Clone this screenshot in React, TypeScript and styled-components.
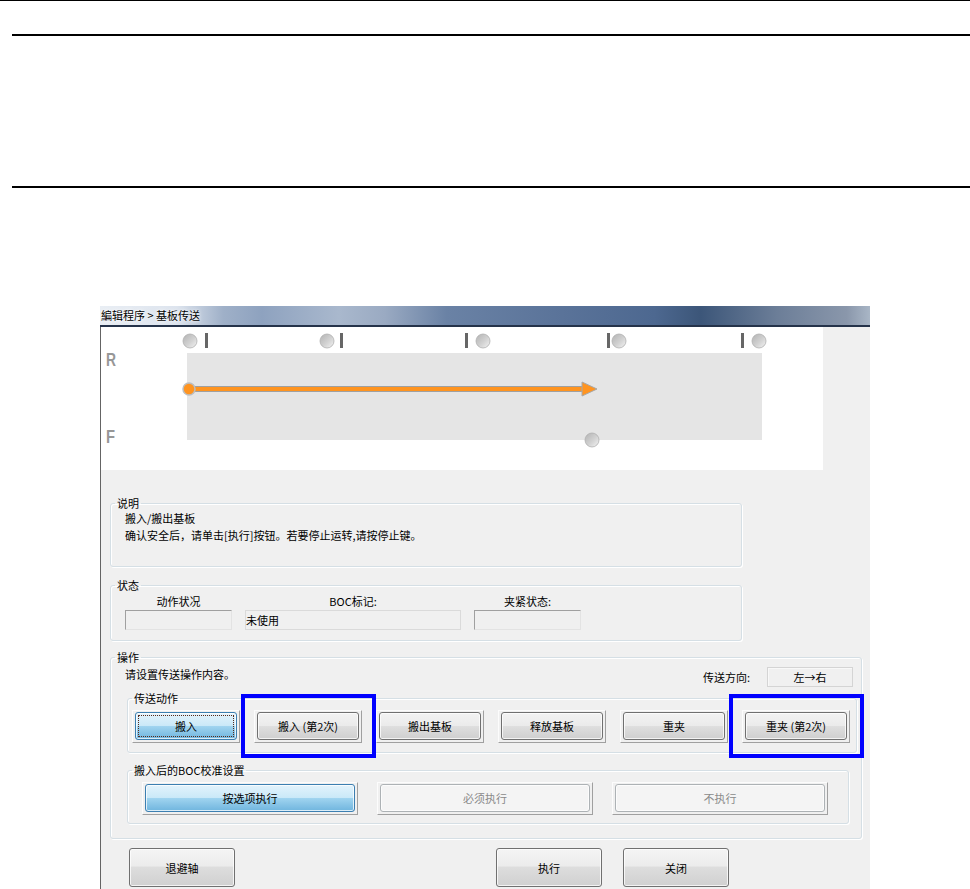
import React from 'react';
import styled, { createGlobalStyle } from 'styled-components';

const GlobalStyle = createGlobalStyle`
  html, body { margin: 0; padding: 0; background: #fff; }
  body {
    font-family: "Noto Sans CJK SC", "Liberation Sans", sans-serif;
    font-size: 11px;
    color: #000;
  }
  * { box-sizing: border-box; }
`;

const Page = styled.div`
  width: 970px;
  height: 889px;
  overflow: hidden;
  display: flex;
  flex-direction: column;
`;

const HairRule = styled.div`
  height: 1px;
  background: #000;
  flex: none;
`;

const Rule = styled.div<{ $top: number }>`
  height: 2px;
  background: #000;
  margin-left: 12px;
  margin-top: ${(p) => p.$top}px;
  flex: none;
`;

const Window = styled.div`
  margin: 118px 0 0 100px;
  width: 770px;
  flex: 1;
  display: flex;
  flex-direction: column;
  min-height: 0;
`;

const TitleBar = styled.div`
  height: 21px;
  flex: none;
  display: flex;
  align-items: center;
  padding: 0 0 2px 1px;
  border-bottom: 2px solid #25334a;
  background: linear-gradient(
    90deg,
    #e9eef4 0%,
    #dde4ee 10%,
    #9fb0c8 16%,
    #8ea2bf 21%,
    #a9b8cd 31%,
    #9aaac2 37%,
    #6a82a5 45%,
    #5a7399 60%,
    #4d6890 72%,
    #3c5679 78%,
    #6c7e98 88%,
    #8a97ab 97%,
    #a9b6c6 100%
  );
  font-size: 11px;
  line-height: 14px;
  text-shadow: 0 0 4px #fff, 0 0 2px #fff;
`;

const Body = styled.div`
  flex: 1;
  display: flex;
  flex-direction: column;
  border-left: 1px solid #646464;
  background: #f0f0f0;
  min-height: 0;
`;

const Canvas = styled.div`
  width: 722px;
  height: 143px;
  background: #fff;
  flex: none;
`;

const Panel = styled.div`
  display: flex;
  flex-direction: column;
  padding: 0 8px 0 9px;
`;

const GroupBox = styled.fieldset<{ $w: number; $mt: number; $ml?: number }>`
  margin: ${(p) => p.$mt}px 0 0 ${(p) => p.$ml ?? 0}px;
  padding: 0;
  min-width: 0;
  width: ${(p) => p.$w}px;
  border: 1px solid #d5dfe5;
  border-radius: 3px;
  box-shadow: inset 1px 1px 0 #fff, 1px 1px 0 #fff;
`;

const Legend = styled.legend`
  margin-left: 4px;
  padding: 0 2px;
  font-size: 11px;
  line-height: 14px;
`;

const DescBody = styled.div`
  height: 56px;
  padding-left: 14px;
  line-height: 17px;
`;

const StatusBody = styled.div`
  height: 48px;
  padding: 2px 0 0 14px;
  display: grid;
  grid-template-columns: 107px 216px 107px;
  grid-template-rows: 14px 20px;
  column-gap: 13px;
  row-gap: 2px;
`;

const FieldLabel = styled.div`
  text-align: center;
  line-height: 14px;
`;

const Field = styled.div<{ $flat?: boolean }>`
  height: 20px;
  border: 1px solid;
  border-color: ${(p) => (p.$flat ? '#dadada' : '#a0a0a0 #e3e3e3 #e3e3e3 #a0a0a0')};
  background: #f0f0f0;
  line-height: 18px;
  padding-left: 0;
`;

const OpBody = styled.div`
  padding: 3px 0 14px 0;
  display: flex;
  flex-direction: column;
`;

const OpHeader = styled.div`
  display: flex;
  justify-content: space-between;
  align-items: flex-start;
  height: 20px;
  padding: 0 8px 0 14px;
  line-height: 14px;
`;

const DirGroup = styled.div`
  display: flex;
  align-items: center;
  gap: 17px;
  height: 20px;
`;

const DirBox = styled.div`
  width: 86px;
  height: 20px;
  border: 1px solid #d4d4d4;
  box-shadow: inset 1px 1px 0 #f8f8f8;
  text-align: center;
  line-height: 18px;
`;

const ButtonRow = styled.div<{ $gap: number; $pad: string }>`
  display: flex;
  gap: ${(p) => p.$gap}px;
  padding: ${(p) => p.$pad};
`;

const Cell = styled.div`
  position: relative;
`;

const Frame = styled.div<{ $w: number; $h: number }>`
  width: ${(p) => p.$w}px;
  height: ${(p) => p.$h}px;
  padding: 1px 2px 2px 2px;
  border: 1px solid;
  border-color: #fcfcfc #a0a0a0 #a0a0a0 #fcfcfc;
`;

type Variant = 'normal' | 'blue' | 'disabled';

const Btn = styled.button<{ $variant?: Variant }>`
  width: 100%;
  height: 100%;
  padding: 0;
  border-radius: 3px;
  font-family: inherit;
  font-size: 11px;
  cursor: default;
  border: 1px solid
    ${(p) => (p.$variant === 'blue' ? '#3c7fb1' : p.$variant === 'disabled' ? '#adb2b5' : '#707070')};
  color: ${(p) => (p.$variant === 'disabled' ? '#8a8a8a' : '#000')};
  background: ${(p) =>
    p.$variant === 'blue'
      ? 'linear-gradient(#e3f3fc 0%, #cbe9f8 48%, #9fd3ef 52%, #6fb5de 100%)'
      : p.$variant === 'disabled'
      ? '#f4f4f4'
      : 'linear-gradient(#f3f3f3 0%, #ebebeb 48%, #dedede 52%, #cfcfcf 100%)'};
  box-shadow: inset 0 0 0 1px rgba(255, 255, 255, 0.75);
`;

const FocusBtn = styled(Btn)`
  outline: 1px dotted #5a2a1a;
  outline-offset: -4px;
`;

const Mark = styled.span`
  position: absolute;
  top: -16px;
  bottom: -15px;
  left: -13px;
  right: -14px;
  border: 4px solid #0000ff;
  pointer-events: none;
`;

const BottomRow = styled.div`
  display: flex;
  margin: 9px 0 0 19px;
`;

const BigButton = styled(Btn)`
  width: 106px;
  height: 39px;
  flex: none;
  font-size: 11px;
  background: linear-gradient(#f4f4f4 0%, #ececec 45%, #dddddd 50%, #d0d0d0 100%);
`;

const Spacer = styled.div<{ $w: number }>`
  width: ${(p) => p.$w}px;
  flex: none;
`;

function Diagram() {
  const tops = [
    { c: 89, b: 104 },
    { c: 226, b: 239 },
    { c: 382, b: 364 },
    { c: 518, b: 506 },
    { c: 658, b: 640 },
  ];
  const axisFont = "'Liberation Sans', Arial, sans-serif";
  return (
    <svg width="722" height="143" viewBox="0 0 722 143">
      <defs>
        <linearGradient id="ball" x1="0" y1="0" x2="1" y2="1">
          <stop offset="0" stopColor="#b2b2b2" />
          <stop offset="0.55" stopColor="#d2d2d2" />
          <stop offset="1" stopColor="#f4f4f4" />
        </linearGradient>
      </defs>
      <rect x="86" y="26" width="575" height="87" fill="#e5e5e5" />
      <text
        x="5"
        y="39"
        fontFamily={axisFont}
        fontWeight="bold"
        fontSize="19"
        fill="#979797"
        textLength="10"
        lengthAdjust="spacingAndGlyphs"
      >
        R
      </text>
      <text
        x="5"
        y="116"
        fontFamily={axisFont}
        fontWeight="bold"
        fontSize="19"
        fill="#979797"
        textLength="9"
        lengthAdjust="spacingAndGlyphs"
      >
        F
      </text>
      {tops.map((t, i) => (
        <g key={i}>
          <circle cx={t.c} cy={14} r={7} fill="url(#ball)" stroke="#b0b0b0" strokeWidth="0.8" />
          <rect x={t.b} y={6} width={3} height={15} fill="#666" />
        </g>
      ))}
      <line x1="88" y1="62" x2="484" y2="62" stroke="#a0a0a0" strokeWidth="6" />
      <line x1="88" y1="62" x2="484" y2="62" stroke="#ff9420" strokeWidth="4" />
      <polygon points="481,55 496,62 481,69" fill="#ff9420" stroke="#a8a8a8" strokeWidth="1" />
      <circle cx="88" cy="62" r="6" fill="#ff9420" stroke="#bdbdbd" strokeWidth="1.5" />
      <circle cx="491" cy="113" r="7" fill="url(#ball)" stroke="#b0b0b0" strokeWidth="0.8" />
    </svg>
  );
}

const transferButtons: { label: string; variant?: Variant; focus?: boolean; mark?: boolean }[] = [
  { label: '搬入', variant: 'blue', focus: true },
  { label: '搬入 (第2次)', mark: true },
  { label: '搬出基板' },
  { label: '释放基板' },
  { label: '重夹' },
  { label: '重夹 (第2次)', mark: true },
];

const bocButtons: { label: string; variant: Variant }[] = [
  { label: '按选项执行', variant: 'blue' },
  { label: '必须执行', variant: 'disabled' },
  { label: '不执行', variant: 'disabled' },
];

export default function App() {
  return (
    <Page>
      <GlobalStyle />
      <HairRule />
      <Rule $top={33} />
      <Rule $top={150} />
      <Window>
        <TitleBar>編辑程序 &gt; 基板传送</TitleBar>
        <Body>
          <Canvas>
            <Diagram />
          </Canvas>
          <Panel>
            <GroupBox $w={632} $mt={26}>
              <Legend>说明</Legend>
              <DescBody>
                <div>搬入/搬出基板</div>
                <div>确认安全后，请单击[执行]按钮。若要停止运转,请按停止键。</div>
              </DescBody>
            </GroupBox>

            <GroupBox $w={632} $mt={11}>
              <Legend>状态</Legend>
              <StatusBody>
                <FieldLabel>动作状况</FieldLabel>
                <FieldLabel>BOC标记:</FieldLabel>
                <FieldLabel>夹紧状态:</FieldLabel>
                <Field />
                <Field $flat>未使用</Field>
                <Field />
              </StatusBody>
            </GroupBox>

            <GroupBox $w={752} $mt={9}>
              <Legend>操作</Legend>
              <OpBody>
                <OpHeader>
                  <span>请设置传送操作内容。</span>
                  <DirGroup>
                    <span>传送方向:</span>
                    <DirBox>左→右</DirBox>
                  </DirGroup>
                </OpHeader>

                <GroupBox $w={730} $mt={4} $ml={16}>
                  <Legend>传送动作</Legend>
                  <ButtonRow $gap={14} $pad="5px 0 9px 4px">
                    {transferButtons.map((b) => (
                      <Cell key={b.label}>
                        <Frame $w={108} $h={33}>
                          {b.focus ? (
                            <FocusBtn $variant={b.variant}>{b.label}</FocusBtn>
                          ) : (
                            <Btn $variant={b.variant}>{b.label}</Btn>
                          )}
                        </Frame>
                        {b.mark && <Mark />}
                      </Cell>
                    ))}
                  </ButtonRow>
                </GroupBox>

                <GroupBox $w={722} $mt={10} $ml={16}>
                  <Legend>搬入后的BOC校准设置</Legend>
                  <ButtonRow $gap={19} $pad="5px 0 8px 14px">
                    {bocButtons.map((b) => (
                      <Cell key={b.label}>
                        <Frame $w={216} $h={33}>
                          <Btn $variant={b.variant}>{b.label}</Btn>
                        </Frame>
                      </Cell>
                    ))}
                  </ButtonRow>
                </GroupBox>
              </OpBody>
            </GroupBox>

            <BottomRow>
              <BigButton>退避轴</BigButton>
              <Spacer $w={261} />
              <BigButton>执行</BigButton>
              <Spacer $w={21} />
              <BigButton>关闭</BigButton>
            </BottomRow>
          </Panel>
        </Body>
      </Window>
    </Page>
  );
}
